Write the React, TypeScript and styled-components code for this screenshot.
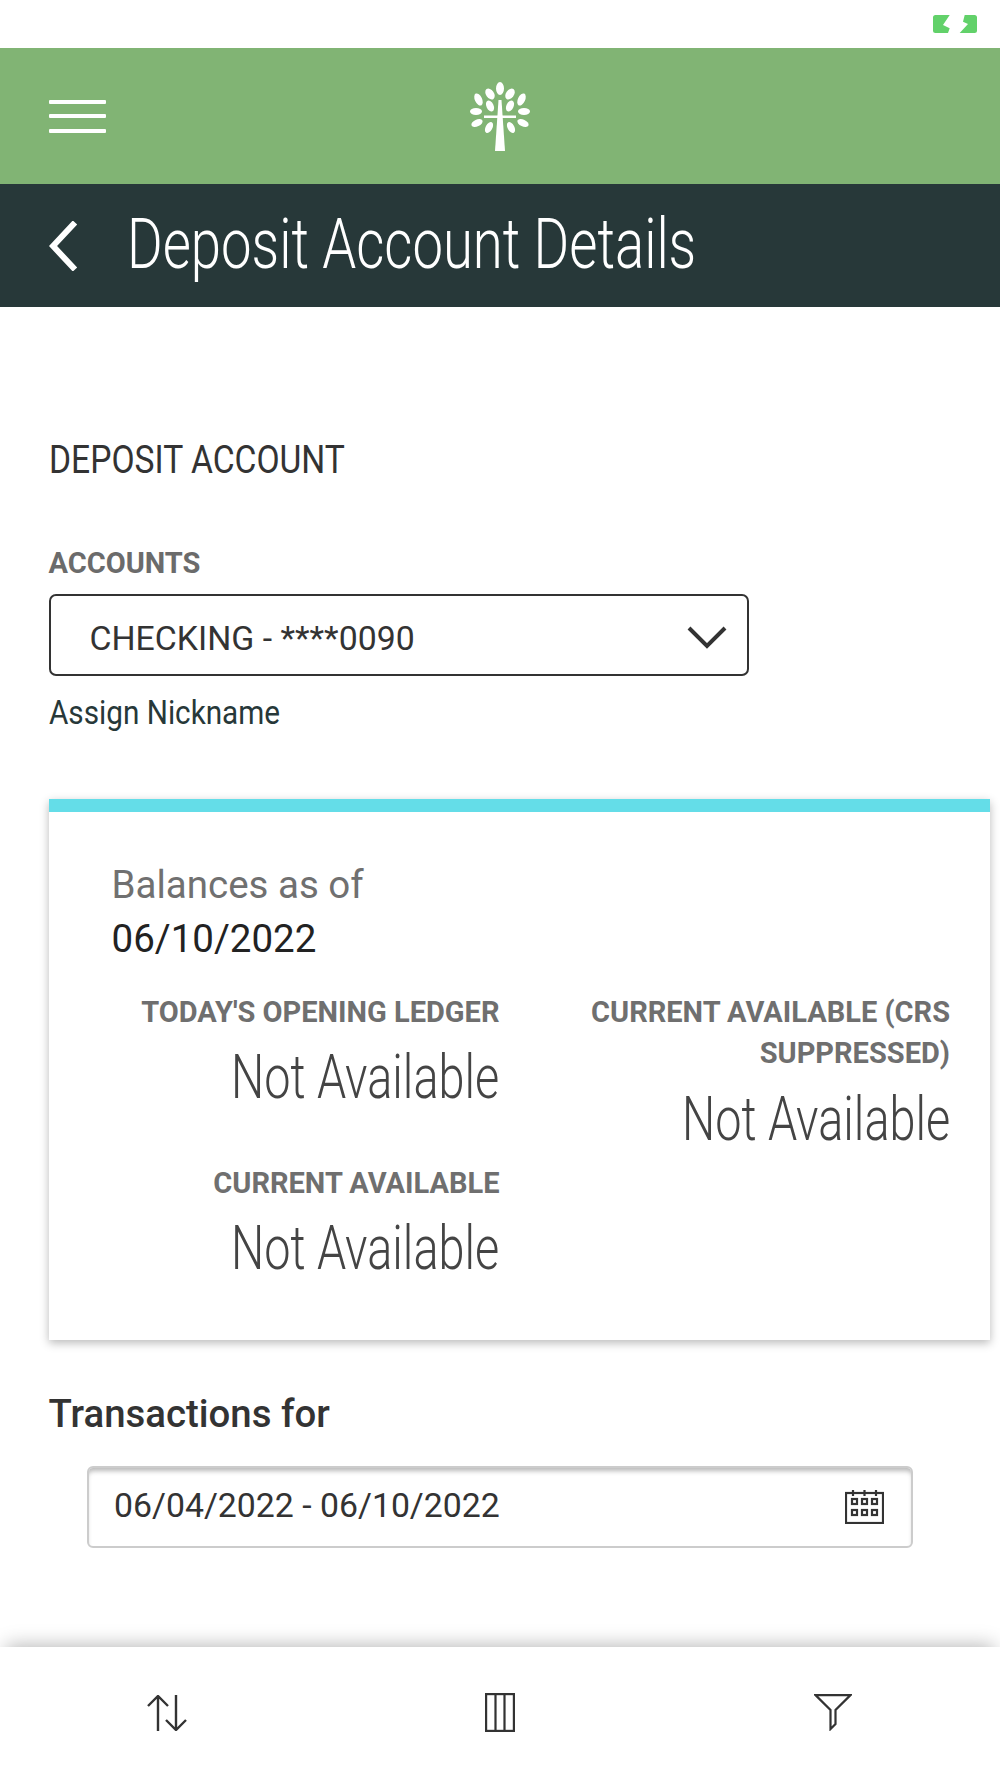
import { FC } from 'react';
import styled, { createGlobalStyle, css } from 'styled-components';

const GlobalStyle = createGlobalStyle`
  html, body {
    margin: 0;
    padding: 0;
    background: #fff;
    font-family: Roboto, "Liberation Sans", sans-serif;
  }
  * { box-sizing: border-box; }
`;

// no condensed family is installed, so the narrow headings are squeezed horizontally
const squeeze = (x: number, origin: 'left' | 'right' = 'left') => css`
  white-space: nowrap;
  transform: scaleX(${x});
  transform-origin: ${origin} center;
`;

const Page = styled.div`
  display: flex;
  flex-direction: column;
  width: 1000px;
  height: 1778px;
  overflow: hidden;
`;

const StatusBar = styled.div`
  height: 48px;
  display: flex;
  justify-content: flex-end;
  align-items: flex-start;
  padding: 15px 23px 0 0;
`;

const Header = styled.header`
  height: 136px;
  background: #81b474;
  display: grid;
  grid-template-columns: 1fr auto 1fr;
  align-items: center;
  padding: 0 49px;
`;

const MenuButton = styled.div`
  display: flex;
  flex-direction: column;
  gap: 10.5px;
  width: 57px;
`;

const MenuLine = styled.span`
  display: block;
  height: 4px;
  background: #fff;
  border-radius: 1px;
`;

const TitleBar = styled.div`
  height: 123px;
  background: #273839;
  display: flex;
  align-items: center;
  padding-left: 49px;
  gap: 48px;
`;

const Title = styled.h1`
  margin: 0 0 4px;
  font-size: 70px;
  line-height: 90px;
  font-weight: 300;
  color: #fff;
  ${squeeze(0.778)}
`;

const Main = styled.main`
  flex: 1;
  padding: 133px 10px 0 48.5px;
  display: flex;
  flex-direction: column;
  align-items: flex-start;
`;

const SectionTitle = styled.div`
  font-size: 39px;
  line-height: 40px;
  color: #333;
  ${squeeze(0.862)}
`;

const FieldLabel = styled.div`
  margin-top: 68px;
  font-size: 29px;
  line-height: 30px;
  font-weight: 700;
  color: #6b6b6b;
`;

const Select = styled.div`
  margin-top: 16px;
  width: 700px;
  height: 82px;
  border: 2px solid #333;
  border-radius: 7px;
  display: flex;
  align-items: center;
  justify-content: space-between;
  padding: 0 20px 0 39px;

  svg {
    margin-top: 4px;
  }
`;

const SelectValue = styled.span`
  margin-top: 6px;
  font-size: 33.8px;
  color: #333;
  white-space: nowrap;
`;

const NicknameLink = styled.a`
  margin-top: 17px;
  display: block;
  font-size: 33px;
  line-height: 40px;
  color: #273839;
  ${squeeze(0.9)}
`;

const Card = styled.section`
  margin-top: 66px;
  width: 941.5px;
  height: 541px;
  background: #fff;
  border-top: 13px solid #64dde8;
  box-shadow: 0 3px 9px rgba(0, 0, 0, 0.28);
  padding: 50px 40px 0 63px;
`;

const BalancesLabel = styled.div<{ $dark?: boolean }>`
  font-size: 38.5px;
  line-height: 46px;
  margin-top: ${p => (p.$dark ? '8px' : '0')};
  color: ${p => (p.$dark ? '#222' : '#707070')};
`;

const BalanceGrid = styled.div`
  margin-top: 29.5px;
  display: grid;
  grid-template-columns: 388px 1fr;
`;

const BalanceColumn = styled.div`
  display: flex;
  flex-direction: column;
  align-items: flex-end;
  text-align: right;
`;

const BalanceName = styled.div<{ $spaced?: boolean }>`
  margin-top: ${p => (p.$spaced ? '49.5px' : '0')};
  font-size: 29px;
  line-height: 41.5px;
  font-weight: 700;
  color: #6f6f6f;
  white-space: nowrap;
`;

const BalanceValue = styled.div`
  margin-top: 8px;
  font-size: 62px;
  line-height: 72px;
  font-weight: 300;
  color: #444;
  ${squeeze(0.755, 'right')}
`;

const TransactionsTitle = styled.div`
  margin-top: 52px;
  font-size: 38.4px;
  line-height: 44px;
  font-weight: 500;
  color: #333;
  white-space: nowrap;
`;

const DateField = styled.div`
  margin: 30px 0 0 38.5px;
  width: 826px;
  height: 82px;
  border: 2px solid #ccc;
  border-radius: 6px;
  box-shadow: inset 0 5px 5px -2px rgba(0, 0, 0, 0.28);
  display: flex;
  align-items: center;
  justify-content: space-between;
  padding: 0 27px 0 25px;
`;

const DateValue = styled.span`
  margin-bottom: 4px;
  font-size: 33.8px;
  color: #333;
  white-space: nowrap;
`;

const BottomBar = styled.nav`
  height: 131px;
  background: #fff;
  box-shadow: 0 -8px 18px -6px rgba(0, 0, 0, 0.28);
  display: grid;
  grid-template-columns: repeat(3, 1fr);
  align-items: center;
  justify-items: center;
  position: relative;
`;

const leaves: [number, number, number, number, number][] = [
  [60, 27.5, 4, 6.5, 0],
  [50, 33, 4, 6, -35],
  [70, 33, 4, 6, 35],
  [38.5, 38.5, 3.6, 6.5, -25],
  [81.5, 38.5, 3.6, 6.5, 25],
  [50, 45, 3.6, 5.8, -25],
  [70, 45, 3.6, 5.8, 25],
  [36, 50.5, 3.4, 6, 90],
  [84, 50.5, 3.4, 6, 90],
  [37, 62, 3.4, 6, 65],
  [83, 62, 3.4, 6, -65],
  [49, 66.5, 3.4, 6, 28],
  [71, 66.5, 3.4, 6, -28],
];

const TreeLogo: FC = () => (
  <svg width="120" height="110" viewBox="0 0 120 110" fill="#fff">
    {leaves.map(([cx, cy, rx, ry, rot]) => (
      <ellipse key={`${cx}-${cy}`} cx={cx} cy={cy} rx={rx} ry={ry} transform={`rotate(${rot} ${cx} ${cy})`} />
    ))}
    <polygon points="58.5,39 61.5,39 65,90 55,90" />
    <rect x="44" y="54.5" width="32" height="2.5" />
  </svg>
);

const BatteryIcon: FC = () => (
  <svg width="44" height="18" viewBox="0 0 44 18">
    <path
      d="M2.5 0H16.7L10 10L16.7 13.3L15 18H2.5Q0 18 0 15.5V2.5Q0 0 2.5 0ZM31.7 0H41.5Q44 0 44 2.5V15.5Q44 18 41.5 18H26.7L35 9L30 6.7Z"
      fill="#62d16a"
    />
  </svg>
);

const BackIcon: FC = () => (
  <svg width="30" height="50" viewBox="0 0 30 50" fill="none" stroke="#fff" strokeWidth="6">
    <path d="M26 1.5L4 25L26 48.5" />
  </svg>
);

const ChevronIcon: FC = () => (
  <svg width="40" height="24" viewBox="0 0 40 24" fill="none" stroke="#333" strokeWidth="4">
    <path d="M2 3L20 21L38 3" />
  </svg>
);

const CalendarIcon: FC = () => (
  <svg width="39" height="34" viewBox="0 0 39 34" fill="none" stroke="#333" strokeWidth="2.2">
    <rect x="1" y="3" width="37" height="30" />
    <path d="M8 0V6M19.5 0V6M31 0V6" />
    {[7, 17, 27].map(x =>
      [9, 20].map(y => <rect key={`${x}-${y}`} x={x} y={y} width="5" height="5" />)
    )}
  </svg>
);

const SortIcon: FC = () => (
  <svg width="40" height="36" viewBox="0 0 40 36" fill="none" stroke="#333" strokeWidth="2.4">
    <path d="M11 36V1M1 11L11 1L21 11" />
    <path d="M29 0V35M19 25L29 35L39 25" />
  </svg>
);

const ColumnsIcon: FC = () => (
  <svg width="30" height="39" viewBox="0 0 30 39" fill="none" stroke="#333" strokeWidth="2.2">
    <rect x="1.1" y="1.1" width="27.8" height="36.8" />
    <path d="M10.5 1V38M19.5 1V38" />
  </svg>
);

const FilterIcon: FC = () => (
  <svg width="38" height="37" viewBox="0 0 38 37" fill="none" stroke="#333" strokeWidth="2.2">
    <path d="M1.5 1.1H36.5L21.5 16V30L16.5 35V16Z" />
  </svg>
);

export default function App() {
  return (
    <Page>
      <GlobalStyle />
      <StatusBar>
        <BatteryIcon />
      </StatusBar>
      <Header>
        <MenuButton>
          <MenuLine />
          <MenuLine />
          <MenuLine />
        </MenuButton>
        <TreeLogo />
      </Header>
      <TitleBar>
        <BackIcon />
        <Title>Deposit Account Details</Title>
      </TitleBar>
      <Main>
        <SectionTitle>DEPOSIT ACCOUNT</SectionTitle>
        <FieldLabel>ACCOUNTS</FieldLabel>
        <Select>
          <SelectValue>CHECKING - ****0090</SelectValue>
          <ChevronIcon />
        </Select>
        <NicknameLink>Assign Nickname</NicknameLink>
        <Card>
          <BalancesLabel>Balances as of</BalancesLabel>
          <BalancesLabel $dark>06/10/2022</BalancesLabel>
          <BalanceGrid>
            <BalanceColumn>
              <BalanceName>TODAY'S OPENING LEDGER</BalanceName>
              <BalanceValue>Not Available</BalanceValue>
              <BalanceName $spaced>CURRENT AVAILABLE</BalanceName>
              <BalanceValue>Not Available</BalanceValue>
            </BalanceColumn>
            <BalanceColumn>
              <BalanceName>
                CURRENT AVAILABLE (CRS
                <br />
                SUPPRESSED)
              </BalanceName>
              <BalanceValue>Not Available</BalanceValue>
            </BalanceColumn>
          </BalanceGrid>
        </Card>
        <TransactionsTitle>Transactions for</TransactionsTitle>
        <DateField>
          <DateValue>06/04/2022 - 06/10/2022</DateValue>
          <CalendarIcon />
        </DateField>
      </Main>
      <BottomBar>
        <SortIcon />
        <ColumnsIcon />
        <FilterIcon />
      </BottomBar>
    </Page>
  );
}
